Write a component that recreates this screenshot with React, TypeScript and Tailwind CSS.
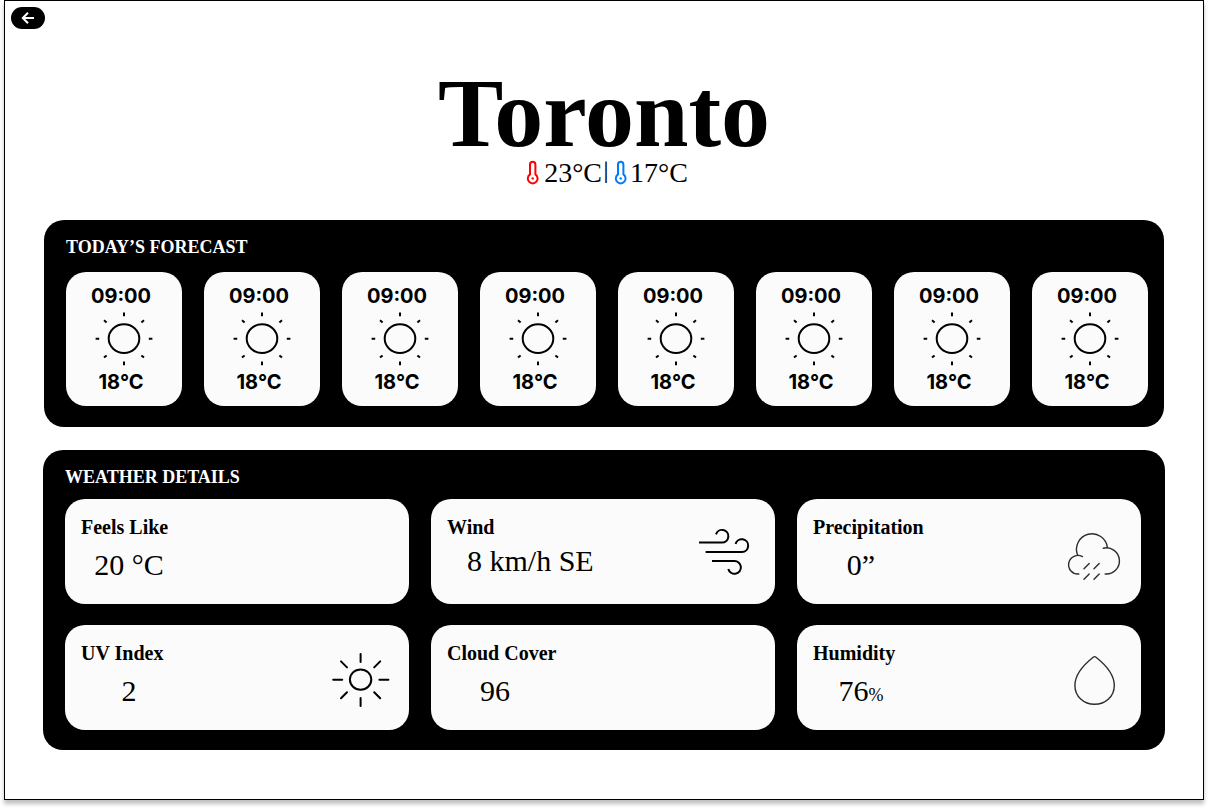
import type { ReactNode } from "react";

const hours = [9, 9, 9, 9, 9, 9, 9, 9].map((hour, id) => ({
  id,
  time: `${String(hour).padStart(2, "0")}:00`,
  temp: "18°C",
}));

function ArrowIcon() {
  return (
    <svg viewBox="0 0 14 14" className="h-3.5 w-3.5" fill="none" stroke="currentColor" strokeWidth="2" aria-hidden="true">
      <path d="M13 7H2M7 1.8 1.8 7 7 12.2" />
    </svg>
  );
}

function Thermometer({ className }: { className: string }) {
  return (
    <svg viewBox="0 0 14 26" className={`h-[26px] w-3.5 ${className}`} fill="none" stroke="currentColor" strokeWidth="2" aria-hidden="true">
      <path d="M4 14.4V4.4a2.7 2.7 0 0 1 5.4 0v10a4.9 4.9 0 1 1-5.4 0Z" />
      <circle cx="6.7" cy="18.4" r="1.2" fill="currentColor" stroke="none" />
    </svg>
  );
}

function SmallSun() {
  return (
    <svg viewBox="0 0 60 56" className="h-14 w-15" fill="none" stroke="currentColor" strokeWidth="2" aria-hidden="true">
      <ellipse cx="30" cy="27.6" rx="15.3" ry="14.3" />
      <path d="M30 1.6v3.6M30 50.6v3.6M1.6 27.8h3.6M54.8 27.8h3.6M10 9.2l2.6 2.2M50 9.2l-2.6 2.2M10 46.6l2.6-2.2M50 46.6l-2.6-2.2" />
    </svg>
  );
}

function UvIcon() {
  return (
    <svg viewBox="0 0 64 64" className="h-16 w-16" fill="none" stroke="currentColor" strokeWidth="2" strokeLinecap="round" aria-hidden="true">
      <ellipse cx="31.6" cy="31.6" rx="10.7" ry="10.2" />
      <path d="M31.6 6v8M31.6 50v8M4.2 31.8h9M50.4 31.8h9M12 13.4l6 6M51.2 13.4l-6 6M12 50.2l6-6M51.2 50.2l-6-6" />
    </svg>
  );
}

function WindIcon() {
  return (
    <svg viewBox="0 0 64 64" className="h-16 w-16" fill="none" stroke="currentColor" strokeWidth="2" aria-hidden="true">
      <path d="M4 20.5h23A6.3 6.3 0 1 0 21 12.4M10.6 30H47a6.4 6.4 0 1 0-6.4-8M17 39h22.5a6.4 6.4 0 1 1-6.2 8" />
    </svg>
  );
}

function RainIcon() {
  return (
    <svg viewBox="0 0 64 64" className="h-16 w-16 text-[#2b2d33]" fill="none" stroke="currentColor" strokeWidth="1.4" strokeLinecap="round" aria-hidden="true">
      <path d="M16.6 33A15.5 15.5 0 1 1 46.4 25.4" />
      <path d="M42.3 26.2A13.1 13.1 0 1 1 44.2 52" />
      <path d="M21.4 34.6A9.3 9.3 0 1 0 17.8 52" />
      <path d="m28.2 41.6-5.2 5.2M38.2 41.6 33 46.8M28.2 52 23 57.2M38.2 52 33 57.2" />
    </svg>
  );
}

function DropIcon() {
  return (
    <svg viewBox="0 0 64 64" className="h-16 w-16 text-[#2b2d33]" fill="none" stroke="currentColor" strokeWidth="1.4" aria-hidden="true">
      <path d="M32.2 9.2q1.4-1.1 2.8 0C43 15.5 53.3 26.4 53.3 37.4c0 11-8.9 18.9-19.7 18.9S13.9 48.4 13.9 37.4c0-11 10.3-21.9 18.3-28.2Z" />
    </svg>
  );
}

type DetailProps = {
  label: string;
  icon?: ReactNode;
  valueClass?: string;
  children: ReactNode;
};

function Detail({ label, icon, valueClass = "mt-2 w-32 text-center", children }: DetailProps) {
  return (
    <div className="flex min-h-[105px] items-start justify-between rounded-[20px] bg-[#fbfbfb] pt-4">
      <div>
        <h3 className="pl-4 text-[20px] leading-6 font-bold">{label}</h3>
        <p className={`text-[30px] leading-9 whitespace-nowrap ${valueClass}`}>{children}</p>
      </div>
      {icon && <div className="mt-[7px] mr-4">{icon}</div>}
    </div>
  );
}

export default function App() {
  return (
    <div className="mx-1 mb-2 border border-black bg-white pb-[49px] font-['Liberation_Serif',serif] text-black shadow-[0_4px_4px_rgba(0,0,0,0.25)]">
      <nav className="flex px-1.5 pt-1.5">
        <button type="button" aria-label="Back" className="flex h-[22px] w-[34px] items-center justify-center rounded-full bg-black text-white">
          <ArrowIcon />
        </button>
      </nav>

      <header className="mt-[39px] flex flex-col items-center">
        <h1 className="text-[98px] leading-[91px] font-bold">Toronto</h1>
        <div className="flex h-7 items-center pl-1.5 text-[28px] leading-7">
          <Thermometer className="mr-1 text-[#ff0000]" />
          <span>23°C</span>
          <span className="mx-px font-['Inter',sans-serif] text-[18px] leading-6">|</span>
          <Thermometer className="mr-0.5 ml-1 text-[#007aff]" />
          <span>17°C</span>
        </div>
      </header>

      <main className="mt-[33px] flex flex-col gap-[23px] px-[38px]">
        <section className="mx-px rounded-[20px] bg-black pt-[13px] pr-4 pb-[21px] pl-[22px]">
          <h2 className="mb-[11px] text-[18px] leading-7 font-bold text-white">TODAY’S FORECAST</h2>
          <ul className="grid grid-cols-8 gap-[22px]">
            {hours.map(({ id, time, temp }) => (
              <li
                key={id}
                className="flex flex-col items-center gap-px rounded-[20px] bg-[#fbfbfb] py-2.5 font-['Inter',sans-serif] text-[20px] leading-7 font-bold"
              >
                <span className="pr-1.5">{time}</span>
                <SmallSun />
                <span className="pr-1.5">{temp}</span>
              </li>
            ))}
          </ul>
        </section>

        <section className="rounded-[20px] bg-black pt-[13px] pr-6 pb-5 pl-[22px]">
          <h2 className="mb-2 text-[18px] leading-7 font-bold text-white">WEATHER DETAILS</h2>
          <div className="grid grid-cols-3 gap-x-[22px] gap-y-[21px]">
            <Detail label="Feels Like">20 °C</Detail>
            <Detail label="Wind" icon={<WindIcon />} valueClass="mt-1 pl-9">
              8 km/h SE
            </Detail>
            <Detail label="Precipitation" icon={<RainIcon />}>0”</Detail>
            <Detail label="UV Index" icon={<UvIcon />}>2</Detail>
            <Detail label="Cloud Cover">96</Detail>
            <Detail label="Humidity" icon={<DropIcon />}>
              76<span className="text-[18px]">%</span>
            </Detail>
          </div>
        </section>
      </main>
    </div>
  );
}
